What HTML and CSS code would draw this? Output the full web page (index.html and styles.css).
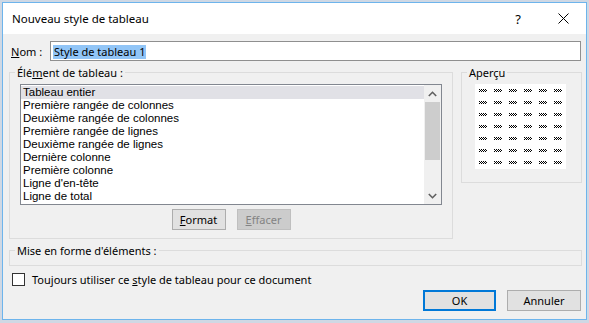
FILE: index.html
```html
<!DOCTYPE html>
<html lang="fr">
<head>
    <meta charset="UTF-8">
    <title>Nouveau style de tableau</title>
    <link rel="stylesheet" href="styles.css">
</head>
<body>
    <div class="window">
        <div class="titlebar">
            <span class="title">Nouveau style de tableau</span>
            <span class="help">?</span>
            <span class="close">
                <svg width="11" height="11" viewBox="0 0 11 11"><path d="M0.5 0.5 L10.5 10.5 M10.5 0.5 L0.5 10.5" stroke="#000" stroke-width="1" fill="none"/></svg>
            </span>
        </div>

        <div class="content">
            <div class="name-row">
                <label class="name-label"><u>N</u>om :</label>
                <div class="textbox"><span class="selected">Style de tableau 1</span></div>
            </div>

            <div class="groups">
                <fieldset class="group elements">
                    <legend>Élé<u>m</u>ent de tableau :</legend>
                    <div class="group-body">
                        <div class="listbox">
                            <ul class="items">
                                <li class="current">Tableau entier</li>
                                <li>Première rangée de colonnes</li>
                                <li>Deuxième rangée de colonnes</li>
                                <li>Première rangée de lignes</li>
                                <li>Deuxième rangée de lignes</li>
                                <li>Dernière colonne</li>
                                <li>Première colonne</li>
                                <li>Ligne d'en-tête</li>
                                <li>Ligne de total</li>
                            </ul>
                            <div class="scrollbar">
                                <div class="arrow">
                                    <svg width="9" height="6" viewBox="0 0 9 6"><path d="M0.8 5 L4.5 1.3 L8.2 5" stroke="#606060" stroke-width="1.6" fill="none"/></svg>
                                </div>
                                <div class="thumb"></div>
                                <div class="track"></div>
                                <div class="arrow">
                                    <svg width="9" height="6" viewBox="0 0 9 6"><path d="M0.8 1 L4.5 4.7 L8.2 1" stroke="#606060" stroke-width="1.6" fill="none"/></svg>
                                </div>
                            </div>
                        </div>
                        <div class="list-buttons">
                            <button class="btn"><u>F</u>ormat</button>
                            <button class="btn" disabled><u>E</u>ffacer</button>
                        </div>
                    </div>
                </fieldset>

                <fieldset class="group preview">
                    <legend>Aperçu</legend>
                    <div class="group-body">
                        <div class="sample">
                            <i></i><i></i><i></i><i></i><i></i><i></i>
                            <i></i><i></i><i></i><i></i><i></i><i></i>
                            <i></i><i></i><i></i><i></i><i></i><i></i>
                            <i></i><i></i><i></i><i></i><i></i><i></i>
                            <i></i><i></i><i></i><i></i><i></i><i></i>
                            <i></i><i></i><i></i><i></i><i></i><i></i>
                            <i></i><i></i><i></i><i></i><i></i><i></i>
                        </div>
                    </div>
                </fieldset>
            </div>

            <fieldset class="group formatting">
                <legend>Mise en forme d'éléments :</legend>
                <div class="group-body"></div>
            </fieldset>

            <label class="check-row">
                <span class="checkbox"></span>
                <span>Toujours utiliser ce <u>s</u>tyle de tableau pour ce document</span>
            </label>

            <div class="actions">
                <button class="btn ok">OK</button>
                <button class="btn cancel">Annuler</button>
            </div>
        </div>
    </div>
</body>
</html>
```

FILE: styles.css
```css
* { margin: 0; padding: 0; box-sizing: border-box; }
body {
    font-family: "Noto Sans", "Open Sans", sans-serif;
    font-size: 11px;
    color: #000;
    background: #cfd8e4;
    padding: 2px 2px 0 2px;
}
.window {
    width: 585px;
    height: 318px;
    border: 1px solid #6db4ec;
    background: #f0f0f0;
}
.titlebar {
    height: 31px;
    background: #fff;
    display: flex;
    align-items: center;
    padding-left: 9px;
}
.title { font-size: 11.5px; flex: 1; }
.help {
    width: 44px;
    text-align: center;
    font-size: 13px;
}
.close {
    width: 46px;
    display: flex;
    justify-content: center;
}
.content { padding: 7px 4px 0 6px; }
.name-row {
    display: flex;
    align-items: center;
    height: 20px;
}
.name-label { width: 41px; padding-left: 2px; }
.textbox {
    flex: 1;
    height: 20px;
    margin-right: 1px;
    border: 1px solid #8f8f8f;
    background: #fff;
    padding: 2px 0 0 2px;
}
.selected {
    display: inline-block;
    background: #91c5f7;
    line-height: 14px;
    padding: 0 1px;
}
.groups {
    display: grid;
    grid-template-columns: 444px 121px;
    gap: 8px;
    align-items: start;
    margin-top: 4px;
}
.group {
    border: 1px solid #dcdcdc;
    padding: 0;
    margin: 0;
    min-width: 0;
}
.group legend {
    margin-left: 5px;
    padding: 0 2px;
    line-height: 15px;
}
.elements .group-body { padding: 4px 10px 8px 10px; }
.listbox {
    display: flex;
    height: 121px;
    border: 1px solid #828790;
    background: #fff;
}
.items {
    list-style: none;
    flex: 1;
    padding-top: 1px;
    font-family: "Liberation Sans", Arial, sans-serif;
    font-size: 11.5px;
}
.items li {
    height: 13px;
    line-height: 13px;
    padding-left: 2px;
    white-space: nowrap;
}
.items li.current { background: #e1e1e6; }
.scrollbar {
    width: 17px;
    display: flex;
    flex-direction: column;
    background: #f0f0f0;
}
.scrollbar .arrow {
    height: 17px;
    display: flex;
    align-items: center;
    justify-content: center;
}
.scrollbar .thumb {
    height: 58px;
    margin: 0 1px;
    background: #cdcdcd;
}
.scrollbar .track { flex: 1; }
.list-buttons {
    display: flex;
    justify-content: center;
    gap: 11px;
    margin-top: 4px;
}
.btn {
    font-family: inherit;
    font-size: 11px;
    color: #000;
    height: 21px;
    width: 54px;
    border: 1px solid #adadad;
    background: #e1e1e1;
}
.btn:disabled {
    color: #838383;
    border-color: #bfbfbf;
    background: #cccccc;
}
.preview .group-body { padding: 4px 15px 13px 13px; }
.sample {
    width: 91px;
    height: 85px;
    background: #fff;
    padding: 5px 4px;
    display: grid;
    grid-template-columns: repeat(6, 8px);
    grid-auto-rows: 3px;
    column-gap: 7px;
    row-gap: 9px;
}
.sample i {
    display: block;
    background: repeating-conic-gradient(#000 0 25%, #fff 0 50%) 1px 0 / 2px 2px;
}
.formatting { margin-top: 4px; }
.formatting .group-body { height: 7px; }
.check-row {
    display: flex;
    align-items: center;
    height: 15px;
    margin-top: 6px;
    padding-left: 3px;
}
.checkbox {
    width: 13px;
    height: 13px;
    border: 1px solid #333;
    background: #fff;
    margin-right: 7px;
}
.actions {
    display: flex;
    justify-content: flex-end;
    gap: 11px;
    margin-top: 3px;
    margin-right: 1px;
}
.btn.ok { width: 73px; border: 2px solid #0078d7; }
.btn.cancel { width: 74px; }
```
